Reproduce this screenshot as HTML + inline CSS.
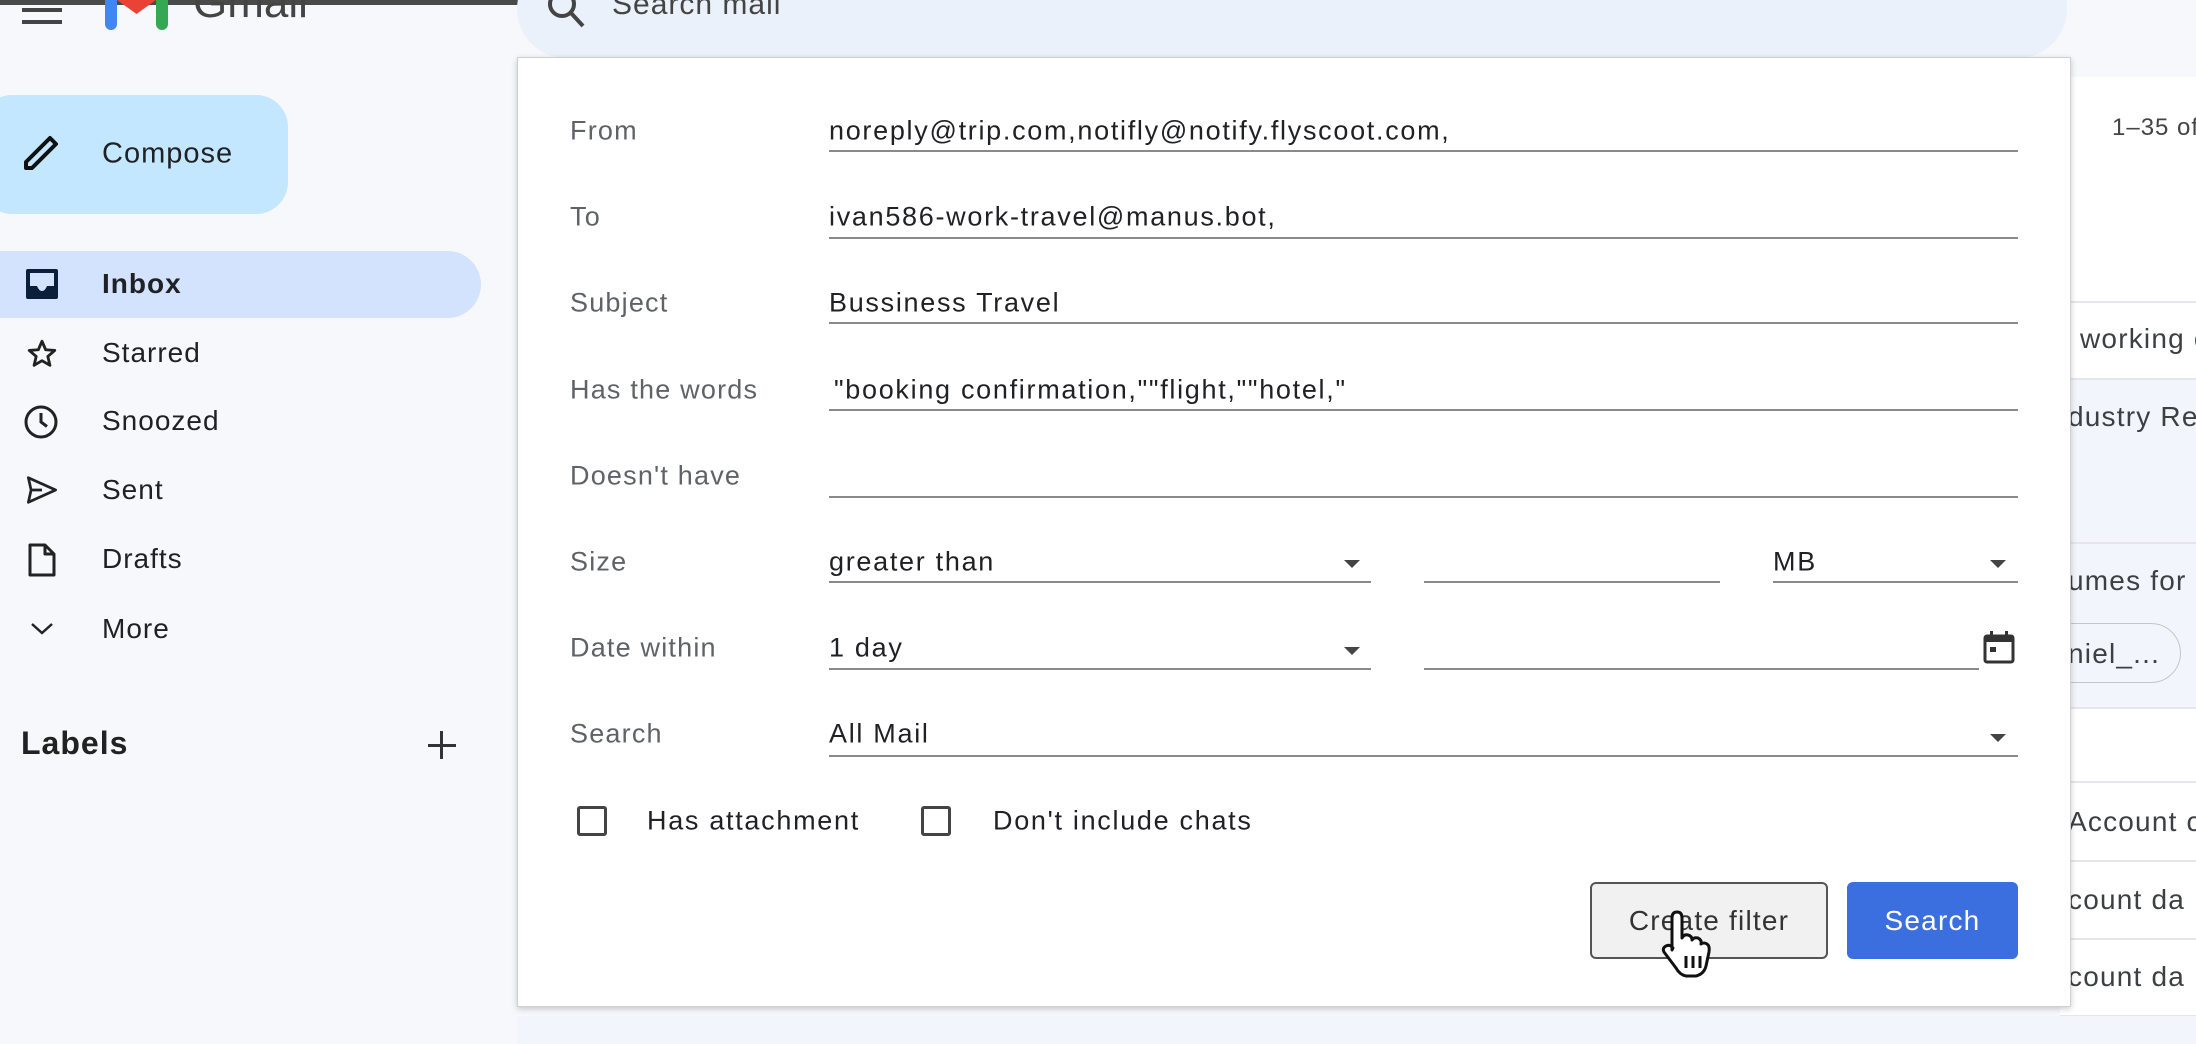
<!DOCTYPE html>
<html><head><meta charset="utf-8"><style>
*{box-sizing:border-box;margin:0;padding:0}
body{width:2196px;height:1044px;overflow:hidden;background:#f6f8fc;font-family:"Liberation Sans",Arial,sans-serif;color:#202124;position:relative}
.a{position:absolute}
.nav{position:absolute;left:102px;font-size:28px;color:#202124;transform:translateY(-50%);letter-spacing:1px}
.lbl{position:absolute;left:570px;font-size:27px;color:#5f6368;transform:translateY(-50%);letter-spacing:1.2px}
.val{position:absolute;font-size:27px;color:#202124;transform:translateY(-50%);letter-spacing:1.7px;white-space:nowrap}
.ul{position:absolute;height:2px;background:#8a8a8a}
.rt{position:absolute;left:2068px;font-size:28px;color:#3c4043;white-space:nowrap;transform:translateY(-50%);letter-spacing:1.2px}
.sep{position:absolute;left:2060px;width:136px;height:1.5px;background:#e4e6ea}
.tri{position:absolute;width:0;height:0;border-left:8px solid transparent;border-right:8px solid transparent;border-top:8px solid #444}
.cb{position:absolute;width:30px;height:30px;border:3px solid #444;border-radius:3px;top:806px}
</style></head><body>
<div class="a" style="left:0;top:0;width:1582px;height:5px;background:#4a4a4a"></div>
<div class="a" style="left:22px;top:8px;width:40px;height:4px;background:#444"></div>
<div class="a" style="left:22px;top:20px;width:40px;height:4px;background:#444"></div>
<div class="a" style="left:105px;top:0;width:12px;height:30px;background:#4285f4;border-radius:0 0 6px 6px"></div>
<div class="a" style="left:156px;top:0;width:12px;height:30px;background:#34a853;border-radius:0 0 6px 6px"></div>
<div class="a" style="left:117px;top:0;width:39px;height:14px;background:#ea4335;clip-path:polygon(0 0,100% 0,50% 100%)"></div>
<div class="a" style="left:193px;top:-22px;font-size:44px;color:#444">Gmail</div>
<div class="a" style="left:517px;top:-40px;width:1550px;height:98px;background:#eaf1fb;border-radius:49px"></div>
<svg class="a" style="left:545px;top:0" width="42" height="32" viewBox="0 0 42 32"><circle cx="17" cy="4" r="12" fill="none" stroke="#444" stroke-width="4"/><path d="M26 13 L38 26" stroke="#444" stroke-width="4"/></svg>
<div class="a" style="left:612px;top:-12px;font-size:30px;color:#444;letter-spacing:1px">Search mail</div>
<div class="a" style="left:-20px;top:95px;width:308px;height:119px;background:#c2e7ff;border-radius:32px"></div>
<svg class="a" style="left:20px;top:134px" width="44" height="40" viewBox="0 0 44 40"><path d="M6 34 L6 28 L30 4 L36 10 L12 34 Z" fill="none" stroke="#111" stroke-width="4" stroke-linejoin="round"/></svg>
<div class="nav" style="top:154px;font-size:29px">Compose</div>
<div class="a" style="left:0;top:251px;width:481px;height:67px;background:#d3e3fd;border-radius:0 34px 34px 0"></div>
<svg class="a" style="left:25px;top:268px" width="34" height="32" viewBox="0 0 34 32"><rect x="1" y="1" width="32" height="30" rx="2" fill="#0b1f3a"/><path d="M5 5 H29 V18 H22 Q20 23 17 23 Q14 23 12 18 H5 Z" fill="#d3e3fd"/></svg>
<div class="nav" style="top:284px;font-weight:bold">Inbox</div>
<svg class="a" style="left:24px;top:337px" width="36" height="34" viewBox="0 0 24 24"><path d="M12 3l2.6 6 6.4.5-4.9 4.2 1.5 6.3L12 16.7 6.4 20l1.5-6.3L3 9.5l6.4-.5z" fill="none" stroke="#222" stroke-width="2" stroke-linejoin="round"/></svg>
<div class="nav" style="top:353px">Starred</div>
<svg class="a" style="left:23px;top:404px" width="36" height="36" viewBox="0 0 24 24"><circle cx="12" cy="12" r="10" fill="none" stroke="#222" stroke-width="2"/><path d="M12 6v6l4 3" fill="none" stroke="#222" stroke-width="2"/></svg>
<div class="nav" style="top:421px">Snoozed</div>
<svg class="a" style="left:25px;top:475px" width="34" height="30" viewBox="0 0 24 22"><path d="M2 2 L22 11 L2 20 L4 11 Z M4 11 H12" fill="none" stroke="#222" stroke-width="2" stroke-linejoin="round"/></svg>
<div class="nav" style="top:490px">Sent</div>
<svg class="a" style="left:27px;top:542px" width="30" height="36" viewBox="0 0 20 24"><path d="M2 2 H12 L18 8 V22 H2 Z M12 2 V8 H18" fill="none" stroke="#222" stroke-width="2" stroke-linejoin="round"/></svg>
<div class="nav" style="top:559px">Drafts</div>
<svg class="a" style="left:30px;top:622px" width="24" height="14" viewBox="0 0 24 14"><path d="M2 2 L12 11 L22 2" fill="none" stroke="#222" stroke-width="2.5"/></svg>
<div class="nav" style="top:629px">More</div>
<div class="a" style="left:21px;top:725px;font-size:32px;font-weight:bold;color:#222;letter-spacing:1px">Labels</div>
<div class="a" style="left:428px;top:744px;width:28px;height:3px;background:#333"></div>
<div class="a" style="left:440px;top:731px;width:3px;height:28px;background:#333"></div>
<!-- right list -->
<div class="a" style="left:2060px;top:77px;width:136px;height:938px;background:#fff"></div>
<div class="a" style="left:2060px;top:378px;width:136px;height:329px;background:#f2f6fc"></div>
<div class="a" style="left:2112px;top:114px;font-size:24px;color:#444;letter-spacing:1px;white-space:nowrap">1–35 of</div>
<div class="sep" style="top:301px"></div>
<div class="sep" style="top:378px"></div>
<div class="sep" style="top:542px"></div>
<div class="sep" style="top:707px"></div>
<div class="sep" style="top:781px"></div>
<div class="sep" style="top:860px"></div>
<div class="sep" style="top:938px"></div>
<div class="sep" style="top:1015px"></div>
<div class="a" style="left:2060px;top:0;width:136px;height:1044px;overflow:hidden">
<div class="rt" style="left:20px;top:339px">working c</div>
<div class="rt" style="left:8px;top:417px">dustry Res</div>
<div class="rt" style="left:8px;top:581px">umes for D</div>
<div class="a" style="left:-30px;top:623px;width:151px;height:60px;border:1.5px solid #c4c7c5;border-radius:30px;background:#f2f6fc"></div>
<div class="rt" style="left:8px;top:654px">niel_...</div>
<div class="rt" style="left:8px;top:822px">Account c</div>
<div class="rt" style="left:8px;top:900px">count da</div>
<div class="rt" style="left:8px;top:977px">count da</div>
</div>
<div class="a" style="left:517px;top:1016px;width:1679px;height:28px;background:#f2f6fc"></div>
<!-- dialog -->
<div class="a" style="left:517px;top:57px;width:1554px;height:950px;background:#fff;border:1.5px solid #d0d0d0;box-shadow:0 2px 6px rgba(0,0,0,.2)"></div>
<div class="lbl" style="top:131px">From</div>
<div class="lbl" style="top:217px">To</div>
<div class="lbl" style="top:303px">Subject</div>
<div class="lbl" style="top:390px">Has the words</div>
<div class="lbl" style="top:476px">Doesn't have</div>
<div class="lbl" style="top:562px">Size</div>
<div class="lbl" style="top:648px">Date within</div>
<div class="lbl" style="top:734px">Search</div>
<div class="val" style="left:829px;top:131px">noreply@trip.com,notifly@notify.flyscoot.com,</div>
<div class="val" style="left:829px;top:217px">ivan586-work-travel@manus.bot,</div>
<div class="val" style="left:829px;top:303px">Bussiness Travel</div>
<div class="val" style="left:834px;top:390px">"booking confirmation,""flight,""hotel,"</div>
<div class="val" style="left:829px;top:562px">greater than</div>
<div class="val" style="left:1773px;top:562px">MB</div>
<div class="val" style="left:829px;top:648px">1 day</div>
<div class="val" style="left:829px;top:734px">All Mail</div>
<div class="ul" style="left:829px;width:1189px;top:150px"></div>
<div class="ul" style="left:829px;width:1189px;top:237px"></div>
<div class="ul" style="left:829px;width:1189px;top:322px"></div>
<div class="ul" style="left:829px;width:1189px;top:409px"></div>
<div class="ul" style="left:829px;width:1189px;top:496px"></div>
<div class="ul" style="left:829px;width:542px;top:581px"></div>
<div class="ul" style="left:1424px;width:296px;top:581px"></div>
<div class="ul" style="left:1773px;width:245px;top:581px"></div>
<div class="ul" style="left:829px;width:542px;top:668px"></div>
<div class="ul" style="left:1424px;width:555px;top:668px"></div>
<div class="ul" style="left:829px;width:1189px;top:755px"></div>
<div class="tri" style="left:1344px;top:560px"></div>
<div class="tri" style="left:1990px;top:560px"></div>
<div class="tri" style="left:1344px;top:647px"></div>
<div class="tri" style="left:1990px;top:734px"></div>
<svg class="a" style="left:1983px;top:630px" width="32" height="34" viewBox="0 0 32 34"><rect x="2" y="6" width="28" height="26" rx="2" fill="none" stroke="#333" stroke-width="3"/><rect x="2" y="6" width="28" height="6" fill="#333"/><rect x="7" y="1" width="3" height="7" fill="#333"/><rect x="22" y="1" width="3" height="7" fill="#333"/><rect x="7" y="17" width="6" height="5" fill="#333"/></svg>
<div class="cb" style="left:577px"></div>
<div class="val" style="left:647px;top:821px">Has attachment</div>
<div class="cb" style="left:921px"></div>
<div class="val" style="left:993px;top:821px">Don't include chats</div>
<div class="a" style="left:1590px;top:882px;width:238px;height:77px;background:#f1f1f1;border:2px solid #555;border-radius:6px;font-size:28px;color:#333;text-align:center;line-height:73px;letter-spacing:1.2px">Create filter</div>
<div class="a" style="left:1847px;top:882px;width:171px;height:77px;background:#3b6fe0;border-radius:6px;font-size:28px;color:#fff;text-align:center;line-height:77px;letter-spacing:1.2px">Search</div>
<svg class="a" style="left:1660px;top:910px" width="60" height="70" viewBox="0 0 60 70"><path d="M12 8 Q12 2 17 2 Q22 2 22 8 V28 Q24 24 28 25 Q32 26 32 30 Q34 27 38 28 Q42 30 41 34 Q44 32 47 34 Q50 36 49 42 L46 56 Q44 64 36 66 L26 66 Q20 65 16 58 L4 42 Q2 38 6 36 Q10 34 13 38 L12 40 Z" fill="#fff" stroke="#111" stroke-width="3" stroke-linejoin="round"/><path d="M26 46 V58 M33 46 V58 M40 46 V58" stroke="#111" stroke-width="3"/></svg>
</body></html>
